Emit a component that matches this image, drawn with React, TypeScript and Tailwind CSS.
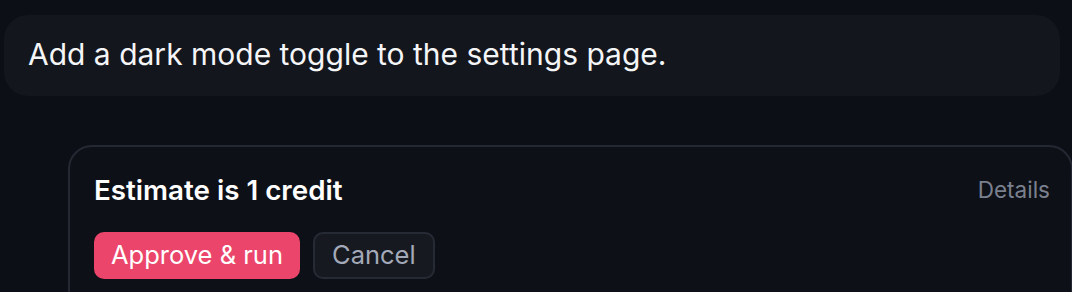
export default function App() {
  return (
    <div
      className="w-[1072px] h-[292px] overflow-hidden bg-[#0d0f16] pt-[15px] pl-[4px] pr-[12px]"
      style={{ fontFamily: "Inter, 'Noto Sans', sans-serif" }}
    >
      {/* User message */}
      <div className="h-[81px] rounded-[24px] bg-[#14161d] pl-[24px] flex items-center">
        <p className="text-[30px] text-[#f4f5f7] leading-none pb-[3px]">
          Add a dark mode toggle to the settings page.
        </p>
      </div>

      {/* Estimate card */}
      <div className="mt-[49px] ml-[64px] -mr-[13px] h-[200px] rounded-[24px] border-2 border-[#242833] bg-[#0e1017] pl-[24px] pr-[21px] pt-[30px]">
        <div className="flex items-start justify-between">
          <h3 className="text-[27.75px] font-semibold text-white leading-none">
            Estimate is 1 credit
          </h3>
          <button className="text-[22.5px] text-[#7b808e] leading-none pt-[2px]">Details</button>
        </div>
        <div className="flex gap-[13px] mt-[27px]">
          <button className="h-[47px] px-[17px] rounded-[10px] bg-[#eb456b] text-[25.5px] text-white">
            Approve &amp; run
          </button>
          <button className="h-[47px] px-[17px] rounded-[10px] border-2 border-[#262a34] bg-[#161920] text-[25.5px] text-[#a3a9b8]">
            Cancel
          </button>
        </div>
      </div>
    </div>
  );
}
